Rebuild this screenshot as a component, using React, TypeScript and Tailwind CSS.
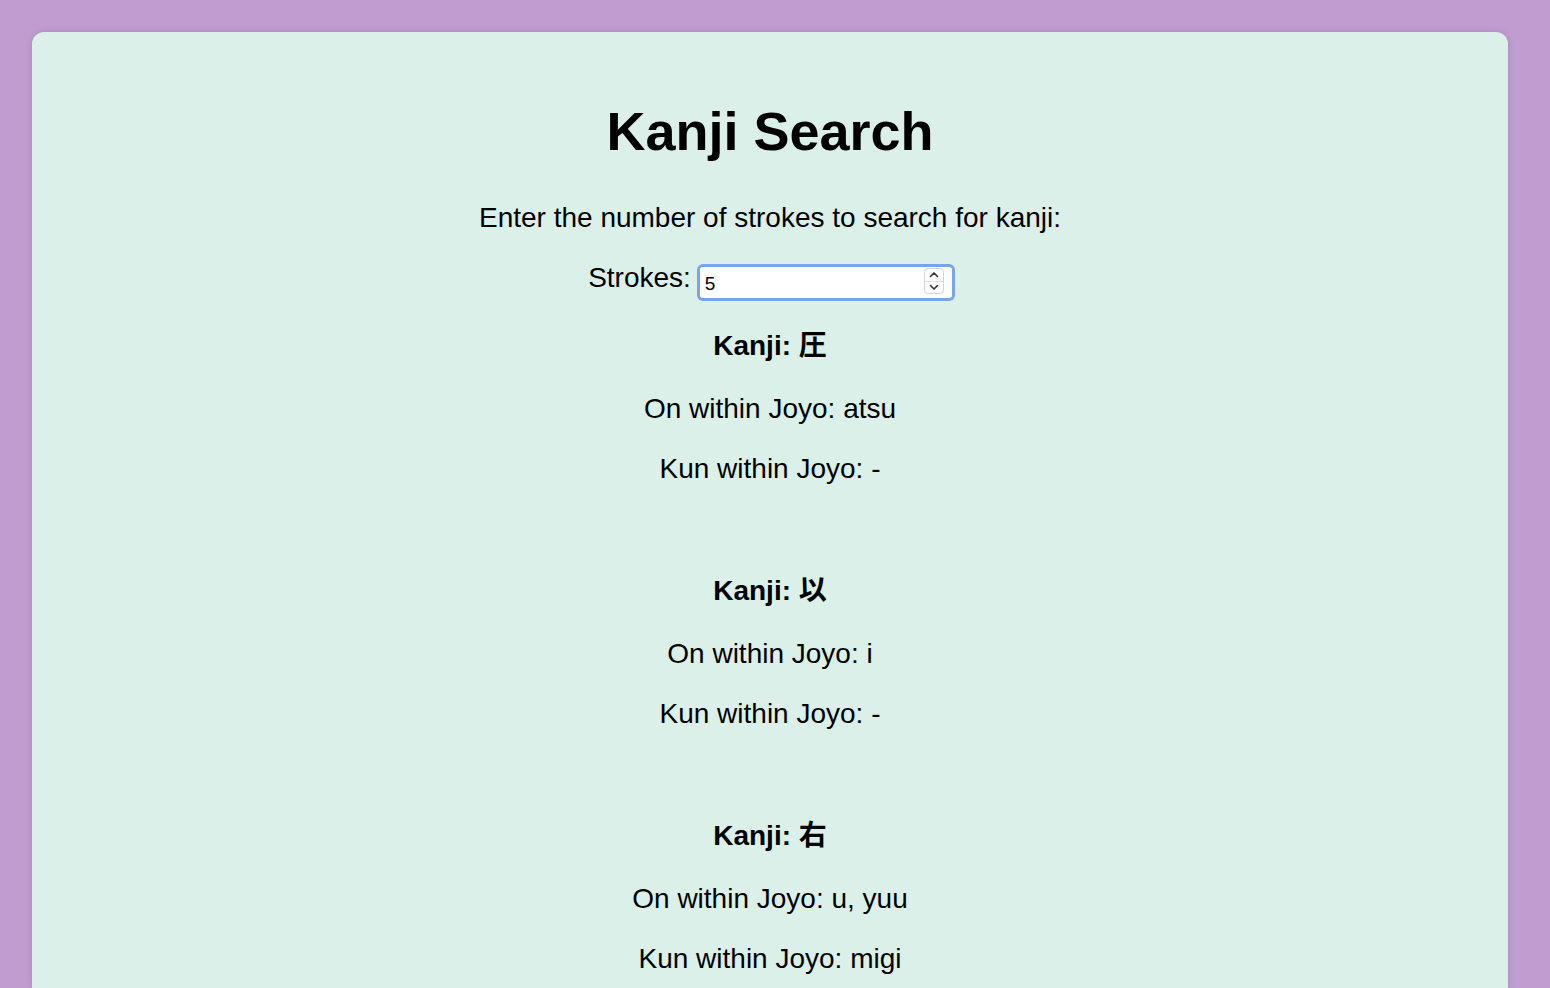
import React, { useState } from 'react';

type Kanji = {
    kanji: string;
    on: string;
    kun: string;
};

const results: Kanji[] = [
    { kanji: '圧', on: 'atsu', kun: '-' },
    { kanji: '以', on: 'i', kun: '-' },
    { kanji: '右', on: 'u, yuu', kun: 'migi' },
];

const font = { fontFamily: '"Liberation Sans", "Noto Sans CJK JP", Arial, sans-serif' };

function Spinner() {
    return (
        <div className="absolute right-[8px] top-[1px] flex h-[26px] w-[20px] flex-col rounded-[4px] border border-[#d4d4d4] bg-white">
            <div className="flex flex-1 items-center justify-center border-b border-[#e2e2e2]">
                <svg width="10" height="7" viewBox="0 0 10 7" fill="none">
                    <path d="M1.5 5.5 L5 2 L8.5 5.5" stroke="#333" strokeWidth="1.6" strokeLinecap="round" strokeLinejoin="round" />
                </svg>
            </div>
            <div className="flex flex-1 items-center justify-center">
                <svg width="10" height="7" viewBox="0 0 10 7" fill="none">
                    <path d="M1.5 1.5 L5 5 L8.5 1.5" stroke="#333" strokeWidth="1.6" strokeLinecap="round" strokeLinejoin="round" />
                </svg>
            </div>
        </div>
    );
}

export default function App() {
    const [strokes, setStrokes] = useState('5');

    return (
        <div className="min-h-screen bg-[#bf9dd0] pl-[32px] pr-[42px] pt-[32px]" style={font}>
            <div className="min-h-[956px] rounded-t-[12px] bg-[#daf0e9] pt-[32px] text-center text-black shadow-[0_0_6px_rgba(0,0,0,0.12)]">
                <h1 className="mb-[39px] mt-[35px] text-[54px] font-bold leading-[64px]">Kanji Search</h1>
                <p className="mb-[28px] text-[28px] leading-[32px]">Enter the number of strokes to search for kanji:</p>

                <div className="flex items-start justify-center gap-[9px]">
                    <label className="text-[28px] leading-[32px]">Strokes:</label>
                    <div className="relative mt-[5px] h-[31px] w-[252px] rounded-[3px] bg-white ring-[3px] ring-[#7aa3e8]">
                        <input
                            type="text"
                            value={strokes}
                            onChange={(e) => setStrokes(e.target.value)}
                            className="h-full w-full bg-transparent pl-[5px] pt-[3px] text-[19px] leading-[28px] text-black outline-none"
                            style={font}
                        />
                        <Spinner />
                    </div>
                </div>

                <div className="mt-[29px]">
                    {results.map((r) => (
                        <div key={r.kanji} className="mb-[87px]">
                            <p className="text-[28px] font-bold leading-[38px]">Kanji: {r.kanji}</p>
                            <p className="mt-[28px] text-[28px] leading-[32px]">On within Joyo: {r.on}</p>
                            <p className="mt-[28px] text-[28px] leading-[32px]">Kun within Joyo: {r.kun}</p>
                        </div>
                    ))}
                </div>
            </div>
        </div>
    );
}
